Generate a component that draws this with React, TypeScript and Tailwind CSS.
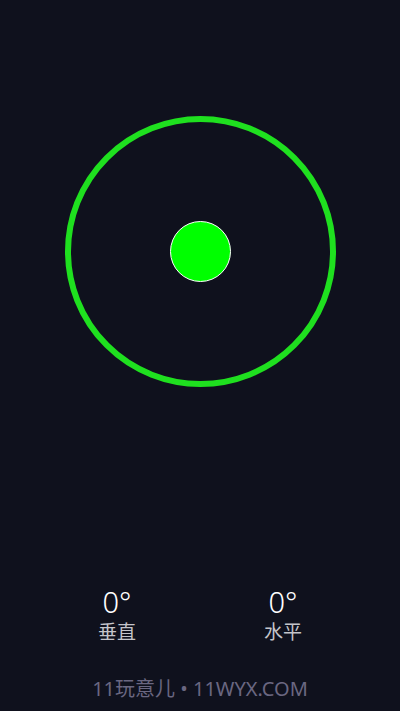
export default function App() {
  const stats = [
    { value: "0°", label: "垂直" },
    { value: "0°", label: "水平" },
  ];
  return (
    <div
      className="w-[400px] h-[711px] bg-[#0f111d] flex flex-col items-center overflow-hidden"
      style={{ fontFamily: '"Noto Sans", "Noto Sans CJK SC", sans-serif' }}
    >
      <div className="mt-[116px] w-[271px] h-[271px] rounded-full border-[6px] border-[#1fe01f] flex items-center justify-center">
        <div className="w-[61px] h-[61px] rounded-full bg-[#00ff00] border border-white" />
      </div>

      <div className="mt-auto flex justify-center">
        {stats.map((s) => (
          <div key={s.label} className="w-[166px] flex flex-col items-center">
            <div className="text-[29px] leading-[34px] font-light text-white">{s.value}</div>
            <div className="text-[19px] leading-[26px] text-[#c4c4ca]">{s.label}</div>
          </div>
        ))}
      </div>

      <div className="mt-[32px] mb-[10px] text-[20px] leading-[24px] text-[#6a6781]">
        11玩意儿 • 11WYX.COM
      </div>
    </div>
  );
}
